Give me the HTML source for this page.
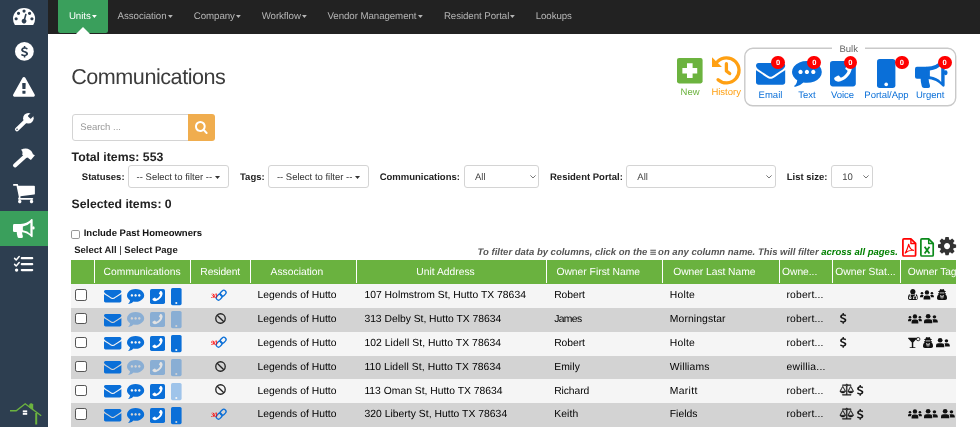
<!DOCTYPE html>
<html lang="en">
<head>
<meta charset="utf-8">
<title>Communications</title>
<style>
*{box-sizing:border-box;margin:0;padding:0}
html,body{width:980px;height:427px;overflow:hidden;background:#fff}
body{position:relative;font-family:"Liberation Sans",sans-serif;color:#333;font-size:10px;text-rendering:geometricPrecision}
.i{position:absolute;display:block;overflow:visible}
.t{position:absolute;line-height:1;white-space:nowrap}
.b{font-weight:bold}
.abs{position:absolute}
#side{position:absolute;left:0;top:0;width:47.5px;height:427px;background:#2d3e50}
#side .act{position:absolute;left:0;top:210.8px;width:47.5px;height:35px;background:#3a9f5c}
#nav{position:absolute;left:47.5px;top:0;width:932.5px;height:33.5px;background:#222}
#nav .tab{position:absolute;left:10.8px;top:0;width:49.6px;height:33px;background:#3a9f5c;border-radius:0 0 2.5px 2.5px}
#nav .notch{position:absolute;left:28.3px;top:26.6px;width:0;height:0;border-left:7px solid transparent;border-right:7px solid transparent;border-bottom:7px solid #fff}
.nv{color:#b5b5b5;text-decoration:none}
h1.t{font-weight:normal;color:#333}
.box{position:absolute;background:#fff;border:1px solid #d4d4d4;border-radius:3px}
.lbl{font-weight:bold;color:#222}
#thead{position:absolute;left:71px;top:260px;width:885px;height:24px;background:#6ab23f}
.sep{position:absolute;top:0;width:1px;height:23px;background:#fff}
.th{color:#fff}
.row{position:absolute;left:71px;width:885px}
.cb{position:absolute;left:4.4px;width:11.2px;height:11.2px;border:1.3px solid #555;border-radius:2.2px;background:#fff}
.td{color:#000}
#app{position:absolute;left:0;top:0;width:980px;height:427px;overflow:hidden;will-change:transform;background:#fff}

</style>
</head>
<body>
<div id="app">
<aside id="side"><div class="act"></div>
<svg class="i" style="left:12.9px;top:7.8px" width="22.1" height="17" viewBox="0 -1280 1792 1408" preserveAspectRatio="none"><path transform="scale(1,-1)" fill="#fff" d="M384 384q0 53 -37.5 90.5t-90.5 37.5t-90.5 -37.5t-37.5 -90.5t37.5 -90.5t90.5 -37.5t90.5 37.5t37.5 90.5zM576 832q0 53 -37.5 90.5t-90.5 37.5t-90.5 -37.5t-37.5 -90.5t37.5 -90.5t90.5 -37.5t90.5 37.5t37.5 90.5zM1004 351l101 382q6 26 -7.5 48.5t-38.5 29.5 t-48 -6.5t-30 -39.5l-101 -382q-60 -5 -107 -43.5t-63 -98.5q-20 -77 20 -146t117 -89t146 20t89 117q16 60 -6 117t-72 91zM1664 384q0 53 -37.5 90.5t-90.5 37.5t-90.5 -37.5t-37.5 -90.5t37.5 -90.5t90.5 -37.5t90.5 37.5t37.5 90.5zM1024 1024q0 53 -37.5 90.5 t-90.5 37.5t-90.5 -37.5t-37.5 -90.5t37.5 -90.5t90.5 -37.5t90.5 37.5t37.5 90.5zM1472 832q0 53 -37.5 90.5t-90.5 37.5t-90.5 -37.5t-37.5 -90.5t37.5 -90.5t90.5 -37.5t90.5 37.5t37.5 90.5zM1792 384q0 -261 -141 -483q-19 -29 -54 -29h-1402q-35 0 -54 29 q-141 221 -141 483q0 182 71 348t191 286t286 191t348 71t348 -71t286 -191t191 -286t71 -348z"/></svg>
<svg class="i" style="left:14.6px;top:42.2px" width="18.8" height="18.8" viewBox="0 0 100 100" preserveAspectRatio="none"><circle cx="50" cy="50" r="50" fill="#fff"/></svg>
<svg class="i" style="left:20.5px;top:45.9px" width="7" height="11.6" viewBox="44.9688 -1536 933.031 1792" preserveAspectRatio="none"><path transform="scale(1,-1)" fill="#2d3e50" d="M978 351q0 -153 -99.5 -263.5t-258.5 -136.5v-175q0 -14 -9 -23t-23 -9h-135q-13 0 -22.5 9.5t-9.5 22.5v175q-66 9 -127.5 31t-101.5 44.5t-74 48t-46.5 37.5t-17.5 18q-17 21 -2 41l103 135q7 10 23 12q15 2 24 -9l2 -2q113 -99 243 -125q37 -8 74 -8q81 0 142.5 43 t61.5 122q0 28 -15 53t-33.5 42t-58.5 37.5t-66 32t-80 32.5q-39 16 -61.5 25t-61.5 26.5t-62.5 31t-56.5 35.5t-53.5 42.5t-43.5 49t-35.5 58t-21 66.5t-8.5 78q0 138 98 242t255 134v180q0 13 9.5 22.5t22.5 9.5h135q14 0 23 -9t9 -23v-176q57 -6 110.5 -23t87 -33.5 t63.5 -37.5t39 -29t15 -14q17 -18 5 -38l-81 -146q-8 -15 -23 -16q-14 -3 -27 7q-3 3 -14.5 12t-39 26.5t-58.5 32t-74.5 26t-85.5 11.5q-95 0 -155 -43t-60 -111q0 -26 8.5 -48t29.5 -41.5t39.5 -33t56 -31t60.5 -27t70 -27.5q53 -20 81 -31.5t76 -35t75.5 -42.5t62 -50 t53 -63.5t31.5 -76.5t13 -94z"/></svg>
<svg class="i" style="left:12.9px;top:77.2px" width="21.9" height="19.7" viewBox="-1.01389 -1536 1794.03 1664" preserveAspectRatio="none"><path transform="scale(1,-1)" fill="#fff" d="M1024 161v190q0 14 -9.5 23.5t-22.5 9.5h-192q-13 0 -22.5 -9.5t-9.5 -23.5v-190q0 -14 9.5 -23.5t22.5 -9.5h192q13 0 22.5 9.5t9.5 23.5zM1022 535l18 459q0 12 -10 19q-13 11 -24 11h-220q-11 0 -24 -11q-10 -7 -10 -21l17 -457q0 -10 10 -16.5t24 -6.5h185 q14 0 23.5 6.5t10.5 16.5zM1008 1469l768 -1408q35 -63 -2 -126q-17 -29 -46.5 -46t-63.5 -17h-1536q-34 0 -63.5 17t-46.5 46q-37 63 -2 126l768 1408q17 31 47 49t65 18t65 -18t47 -49z"/></svg>
<svg class="i" style="left:13.9px;top:112.8px" width="19.7" height="19.3" viewBox="0 0 200 200" preserveAspectRatio="none"><path d="M30 170L122 78" stroke="#fff" stroke-width="40" stroke-linecap="round" fill="none"/><circle cx="146" cy="54" r="54" fill="#fff"/><rect x="-21" y="-90" width="42" height="84" rx="6" transform="translate(150,50) rotate(45)" fill="#2d3e50"/><circle cx="31" cy="169" r="8" fill="#2d3e50"/></svg>
<svg class="i" style="left:12.9px;top:148px" width="21.9" height="19.7" viewBox="0 0 220 200" preserveAspectRatio="none"><path d="M20 178 L122 84" stroke="#fff" stroke-width="40" stroke-linecap="round" fill="none"/><path d="M80 18 C124 -8 176 4 196 50 L200 64 L220 74 L180 122 L158 106 L150 96 C138 102 124 100 114 90 L92 66 C100 50 96 32 80 18 Z" fill="#fff"/></svg>
<svg class="i" style="left:12.9px;top:183.6px" width="21.9" height="19.3" viewBox="0 -1280 1664 1408" preserveAspectRatio="none"><path transform="scale(1,-1)" fill="#fff" d="M640 0q0 -52 -38 -90t-90 -38t-90 38t-38 90t38 90t90 38t90 -38t38 -90zM1536 0q0 -52 -38 -90t-90 -38t-90 38t-38 90t38 90t90 38t90 -38t38 -90zM1664 1088v-512q0 -24 -16.5 -42.5t-40.5 -21.5l-1044 -122q13 -60 13 -70q0 -16 -24 -64h920q26 0 45 -19t19 -45 t-19 -45t-45 -19h-1024q-26 0 -45 19t-19 45q0 11 8 31.5t16 36t21.5 40t15.5 29.5l-177 823h-204q-26 0 -45 19t-19 45t19 45t45 19h256q16 0 28.5 -6.5t19.5 -15.5t13 -24.5t8 -26t5.5 -29.5t4.5 -26h1201q26 0 45 -19t19 -45z"/></svg>
<svg class="i" style="left:13.1px;top:218.9px" width="21.7" height="19" viewBox="0 0 576 512" preserveAspectRatio="none"><g fill="#fff"><rect x="0" y="138" width="240" height="210" rx="34"/><path d="M200 138Q390 128 490 3Q522 -8 522 26V464Q522 498 490 487Q390 360 200 348Z"/><ellipse cx="540" cy="242" rx="34" ry="44"/><path d="M98 330H240V345Q240 400 262 458Q274 512 232 512H160Q128 512 120 480Q98 400 98 330Z"/></g><path d="M262 202Q392 186 462 104V404Q392 324 262 304Z" fill="#3a9f5c"/></svg>
<svg class="i" style="left:14.1px;top:255.7px" width="19.3" height="16.3" viewBox="0 0 193 163" preserveAspectRatio="none"><g stroke="#fff" stroke-linecap="round" fill="none"><path d="M78 22H182M78 82H182M78 141H182" stroke-width="22"/><path d="M6 24L22 40L52 6M6 84L22 100L52 66" stroke-width="15" stroke-linejoin="round"/></g><circle cx="26" cy="141" r="17" fill="#fff"/></svg>
<svg class="i" style="left:10px;top:403px" width="31.5" height="21.5" viewBox="0 0 315 215" preserveAspectRatio="none"><path d="M0 78H62L152 8L312 128" stroke="#6cb33f" stroke-width="14" fill="none" stroke-linejoin="miter"/><path d="M262 100V215" stroke="#6cb33f" stroke-width="20" fill="none"/><path d="M192 46V14Q212 -10 232 14V76Z" fill="#6cb33f"/><rect x="128" y="74" width="44" height="18" fill="#fff"/><rect x="128" y="98" width="44" height="20" fill="#fff"/></svg>
</aside>
<div id="nav"><div class="tab"></div><div class="notch"></div></div>
<a class="t nv" style="left:68.9px;top:12.00px;font-size:9.7px;color:#fff;letter-spacing:-0.06px">Units</a>
<svg class="i" style="left:91.716px;top:15.4px" width="4.8" height="2.9" viewBox="0 0 48 29" preserveAspectRatio="none"><path d="M0 0H48L24 29Z" fill="#fff"/></svg>
<a class="t nv" style="left:117.6px;top:12.00px;font-size:9.7px;color:#b5b5b5;letter-spacing:-0.06px">Association</a>
<svg class="i" style="left:167.546px;top:15.4px" width="4.8" height="2.9" viewBox="0 0 48 29" preserveAspectRatio="none"><path d="M0 0H48L24 29Z" fill="#b5b5b5"/></svg>
<a class="t nv" style="left:193.8px;top:12.00px;font-size:9.7px;color:#b5b5b5;letter-spacing:-0.06px">Company</a>
<svg class="i" style="left:235.906px;top:15.4px" width="4.8" height="2.9" viewBox="0 0 48 29" preserveAspectRatio="none"><path d="M0 0H48L24 29Z" fill="#b5b5b5"/></svg>
<a class="t nv" style="left:261.7px;top:12.00px;font-size:9.7px;color:#b5b5b5;letter-spacing:-0.06px">Workflow</a>
<svg class="i" style="left:301.932px;top:15.4px" width="4.8" height="2.9" viewBox="0 0 48 29" preserveAspectRatio="none"><path d="M0 0H48L24 29Z" fill="#b5b5b5"/></svg>
<a class="t nv" style="left:327.5px;top:12.00px;font-size:9.7px;color:#b5b5b5;letter-spacing:-0.06px">Vendor Management</a>
<svg class="i" style="left:417.535px;top:15.4px" width="4.8" height="2.9" viewBox="0 0 48 29" preserveAspectRatio="none"><path d="M0 0H48L24 29Z" fill="#b5b5b5"/></svg>
<a class="t nv" style="left:443.9px;top:12.00px;font-size:9.7px;color:#b5b5b5;letter-spacing:-0.06px">Resident Portal</a>
<svg class="i" style="left:510.329px;top:15.4px" width="4.8" height="2.9" viewBox="0 0 48 29" preserveAspectRatio="none"><path d="M0 0H48L24 29Z" fill="#b5b5b5"/></svg>
<a class="t nv" style="left:535.7px;top:12.00px;font-size:9.7px;color:#b5b5b5;letter-spacing:-0.06px">Lookups</a>
<h1 class="t" style="left:71.2px;top:66.00px;font-size:21.6px;letter-spacing:-0.473px;color:#3c3c3c">Communications</h1>
<svg class="i" style="left:677px;top:57.5px" width="25.6" height="25.4" viewBox="0 0 100 100" preserveAspectRatio="none"><rect x="0" y="0" width="100" height="100" rx="8" fill="#6cb33f"/><path d="M50 21V79M21 50H79" stroke="#fff" stroke-width="22" fill="none"/></svg>
<span class="t" style="left:680.6px;top:88.00px;font-size:9.5px;color:#6cb33f">New</span>
<svg class="i" style="left:711.8px;top:56px" width="28.6" height="28.4" viewBox="405 155 278 276" preserveAspectRatio="none"><g fill="none" stroke="#ffa012" stroke-width="32" stroke-linecap="round"><path d="M460 208A122 122 0 1 1 464 385"/><path d="M545 230V300L577 326" stroke-linejoin="round"/></g><path d="M405 166V262H502Z" fill="#ffa012"/></svg>
<span class="t" style="left:711.4px;top:88.00px;font-size:9.5px;color:#ffa012">History</span>
<svg class="i" style="left:740px;top:44px" width="220" height="66" viewBox="740 44 220 66" preserveAspectRatio="none"><rect x="744.8" y="48.3" width="210.9" height="57.5" rx="8" fill="none" stroke="#c9c9c9" stroke-width="1.4"/><rect x="832" y="46" width="33" height="5" fill="#fff"/></svg>
<span class="t" style="left:839.5px;top:45.00px;font-size:9.5px;color:#666">Bulk</span>
<svg class="i" style="left:755.9px;top:62.8px" width="29.2" height="21.7" viewBox="0 -1280 1792 1408" preserveAspectRatio="none"><path transform="scale(1,-1)" fill="#0a6fd8" d="M1792 826v-794q0 -66 -47 -113t-113 -47h-1472q-66 0 -113 47t-47 113v794q44 -49 101 -87q362 -246 497 -345q57 -42 92.5 -65.5t94.5 -48t110 -24.5h1h1q51 0 110 24.5t94.5 48t92.5 65.5q170 123 498 345q57 39 100 87zM1792 1120q0 -79 -49 -151t-122 -123 q-376 -261 -468 -325q-10 -7 -42.5 -30.5t-54 -38t-52 -32.5t-57.5 -27t-50 -9h-1h-1q-23 0 -50 9t-57.5 27t-52 32.5t-54 38t-42.5 30.5q-91 64 -262 182.5t-205 142.5q-62 42 -117 115.5t-55 136.5q0 78 41.5 130t118.5 52h1472q65 0 112.5 -47t47.5 -113z"/></svg>
<svg class="i" style="left:791.6px;top:60.8px" width="29.8" height="25.7" viewBox="0 -1280 1792 1504.12" preserveAspectRatio="none"><path transform="scale(1,-1)" fill="#0a6fd8" d="M640 640q0 53 -37.5 90.5t-90.5 37.5t-90.5 -37.5t-37.5 -90.5t37.5 -90.5t90.5 -37.5t90.5 37.5t37.5 90.5zM1024 640q0 53 -37.5 90.5t-90.5 37.5t-90.5 -37.5t-37.5 -90.5t37.5 -90.5t90.5 -37.5t90.5 37.5t37.5 90.5zM1408 640q0 53 -37.5 90.5t-90.5 37.5 t-90.5 -37.5t-37.5 -90.5t37.5 -90.5t90.5 -37.5t90.5 37.5t37.5 90.5zM1792 640q0 -174 -120 -321.5t-326 -233t-450 -85.5q-110 0 -211 18q-173 -173 -435 -229q-52 -10 -86 -13q-12 -1 -22 6t-13 18q-4 15 20 37q5 5 23.5 21.5t25.5 23.5t23.5 25.5t24 31.5t20.5 37 t20 48t14.5 57.5t12.5 72.5q-146 90 -229.5 216.5t-83.5 269.5q0 174 120 321.5t326 233t450 85.5t450 -85.5t326 -233t120 -321.5z"/></svg>
<svg class="i" style="left:829.8px;top:61px" width="25.8" height="25.4" viewBox="0 0 1536 1536" preserveAspectRatio="none"><rect x="0" y="0" width="1536" height="1536" rx="170" fill="#0a6fd8"/><path transform="translate(1290,1250) scale(-0.74,-0.74)" fill="#fff" d="M1408 296q0 -27 -10 -70.5t-21 -68.5q-21 -50 -122 -106q-94 -51 -186 -51q-27 0 -53 3.5t-57.5 12.5t-47 14.5t-55.5 20.5t-49 18q-98 35 -175 83q-127 79 -264 216t-216 264q-48 77 -83 175q-3 9 -18 49t-20.5 55.5t-14.5 47t-12.5 57.5t-3.5 53q0 92 51 186 q56 101 106 122q25 11 68.5 21t70.5 10q14 0 21 -3q18 -6 53 -76q11 -19 30 -54t35 -63.5t31 -53.5q3 -4 17.5 -25t21.5 -35.5t7 -28.5q0 -20 -28.5 -50t-62 -55t-62 -53t-28.5 -46q0 -9 5 -22.5t8.5 -20.5t14 -24t11.5 -19q76 -137 174 -235t235 -174q2 -1 19 -11.5t24 -14 t20.5 -8.5t22.5 -5q18 0 46 28.5t53 62t55 62t50 28.5q14 0 28.5 -7t35.5 -21.5t25 -17.5q25 -15 53.5 -31t63.5 -35t54 -30q70 -35 76 -53q3 -7 3 -21z"/></svg>
<svg class="i" style="left:877.2px;top:59.1px" width="18.4" height="29" viewBox="0 0 320 512" preserveAspectRatio="none"><rect x="0" y="0" width="320" height="512" rx="48" fill="#0a6fd8"/><circle cx="160" cy="448" r="32" fill="#fff"/></svg>
<svg class="i" style="left:915.4px;top:59px" width="32.7" height="29" viewBox="0 0 576 512" preserveAspectRatio="none"><g fill="#0a6fd8"><rect x="0" y="138" width="240" height="210" rx="34"/><path d="M200 138Q390 128 490 3Q522 -8 522 26V464Q522 498 490 487Q390 360 200 348Z"/><ellipse cx="540" cy="242" rx="34" ry="44"/><path d="M98 330H240V345Q240 400 262 458Q274 512 232 512H160Q128 512 120 480Q98 400 98 330Z"/></g><path d="M262 202Q392 186 462 104V404Q392 324 262 304Z" fill="#fff"/></svg>
<div class="abs" style="left:771.3px;top:55.7px;width:13.8px;height:13.8px;border-radius:50%;background:#f00"></div>
<span class="t b" style="left:776.1px;top:59.00px;font-size:7.6px;color:#fff">0</span>
<div class="abs" style="left:807.4px;top:55.7px;width:13.8px;height:13.8px;border-radius:50%;background:#f00"></div>
<span class="t b" style="left:812.2px;top:59.00px;font-size:7.6px;color:#fff">0</span>
<div class="abs" style="left:843.5px;top:55.7px;width:13.8px;height:13.8px;border-radius:50%;background:#f00"></div>
<span class="t b" style="left:848.3px;top:59.00px;font-size:7.6px;color:#fff">0</span>
<div class="abs" style="left:894.9px;top:55.7px;width:13.8px;height:13.8px;border-radius:50%;background:#f00"></div>
<span class="t b" style="left:899.7px;top:59.00px;font-size:7.6px;color:#fff">0</span>
<div class="abs" style="left:937.8px;top:55.7px;width:13.8px;height:13.8px;border-radius:50%;background:#f00"></div>
<span class="t b" style="left:942.6px;top:59.00px;font-size:7.6px;color:#fff">0</span>
<span class="t" style="left:758.6px;top:91.00px;font-size:9.5px;color:#0a6fd8">Email</span>
<span class="t" style="left:798.3px;top:91.00px;font-size:9.5px;color:#0a6fd8">Text</span>
<span class="t" style="left:830.9px;top:91.00px;font-size:9.5px;color:#0a6fd8">Voice</span>
<span class="t" style="left:864.3px;top:91.00px;font-size:9.5px;color:#0a6fd8">Portal/App</span>
<span class="t" style="left:915.9px;top:91.00px;font-size:9.5px;color:#0a6fd8">Urgent</span>
<div class="box" style="left:71.6px;top:113.6px;width:117px;height:27.2px;border-radius:3px 0 0 3px"></div>
<span class="t" style="left:80.3px;top:123.00px;font-size:9.5px;color:#999">Search ...</span>
<div class="abs" style="left:187.6px;top:113.6px;width:27px;height:27.2px;background:#f0ad4e;border-radius:0 3px 3px 0"></div>
<svg class="i" style="left:194.8px;top:120.6px" width="12.6" height="13" viewBox="0 -1408 1664 1664" preserveAspectRatio="none"><path transform="scale(1,-1)" fill="#fff" d="M1152 704q0 185 -131.5 316.5t-316.5 131.5t-316.5 -131.5t-131.5 -316.5t131.5 -316.5t316.5 -131.5t316.5 131.5t131.5 316.5zM1664 -128q0 -52 -38 -90t-90 -38q-54 0 -90 38l-343 342q-179 -124 -399 -124q-143 0 -273.5 55.5t-225 150t-150 225t-55.5 273.5 t55.5 273.5t150 225t225 150t273.5 55.5t273.5 -55.5t225 -150t150 -225t55.5 -273.5q0 -220 -124 -399l343 -343q37 -37 37 -90z"/></svg>
<strong class="t b" style="left:71.6px;top:151.00px;font-size:12.25px;color:#222">Total items: 553</strong>
<strong class="t b" style="left:71.6px;top:198.00px;font-size:12.25px;color:#222">Selected items: 0</strong>
<label class="t lbl" style="left:81.8px;top:173.00px;font-size:9.5px;">Statuses:</label>
<div class="box" style="left:127.9px;top:165.2px;width:101.3px;height:22.4px"></div>
<span class="t" style="left:136.6px;top:173.00px;font-size:9.5px;color:#333">-- Select to filter --</span>
<svg class="i" style="left:214.8px;top:175.5px" width="5" height="2.9" viewBox="0 0 48 29" preserveAspectRatio="none"><path d="M0 0H48L24 29Z" fill="#333"/></svg>
<label class="t lbl" style="left:240px;top:173.00px;font-size:9.5px;">Tags:</label>
<div class="box" style="left:268px;top:165.2px;width:101px;height:22.4px"></div>
<span class="t" style="left:276.9px;top:173.00px;font-size:9.5px;color:#333">-- Select to filter --</span>
<svg class="i" style="left:355.1px;top:175.5px" width="5" height="2.9" viewBox="0 0 48 29" preserveAspectRatio="none"><path d="M0 0H48L24 29Z" fill="#333"/></svg>
<label class="t lbl" style="left:379.7px;top:173.00px;font-size:9.5px;">Communications:</label>
<div class="box" style="left:463.7px;top:165.2px;width:75.5px;height:22.4px"></div>
<span class="t" style="left:475px;top:173.00px;font-size:9.5px;color:#444">All</span>
<label class="t lbl" style="left:550px;top:173.00px;font-size:9.5px;">Resident Portal:</label>
<div class="box" style="left:626px;top:165.2px;width:149.6px;height:22.4px"></div>
<span class="t" style="left:637.3px;top:173.00px;font-size:9.5px;color:#444">All</span>
<label class="t lbl" style="left:786.7px;top:173.00px;font-size:9.5px;">List size:</label>
<div class="box" style="left:830.5px;top:165.2px;width:42.2px;height:22.4px"></div>
<span class="t" style="left:842.3px;top:173.00px;font-size:9.5px;color:#444">10</span>
<svg class="i" style="left:529.6px;top:174.8px" width="6" height="3.6" viewBox="0 0 60 36" preserveAspectRatio="none"><path d="M4 4L30 30L56 4" stroke="#555" stroke-width="8" fill="none"/></svg>
<svg class="i" style="left:766px;top:174.8px" width="6" height="3.6" viewBox="0 0 60 36" preserveAspectRatio="none"><path d="M4 4L30 30L56 4" stroke="#555" stroke-width="8" fill="none"/></svg>
<svg class="i" style="left:863px;top:174.8px" width="6" height="3.6" viewBox="0 0 60 36" preserveAspectRatio="none"><path d="M4 4L30 30L56 4" stroke="#555" stroke-width="8" fill="none"/></svg>
<div class="abs" style="left:71px;top:230px;width:9px;height:9px;border:1px solid #999;border-radius:1.8px;background:#fff"></div>
<label class="t b" style="left:83.7px;top:229.00px;font-size:9.5px;color:#111">Include Past Homeowners</label>
<span class="t b" style="left:74.2px;top:246.00px;font-size:9.5px;color:#222">Select All <span style="font-weight:normal">|</span> Select Page</span>
<span class="t b" style="left:477.6px;top:248.00px;font-size:9.5px;font-style:italic;color:#555">To filter data by columns, click on the <span style="font-style:normal;font-size:11.5px;line-height:0;letter-spacing:-1.1px;position:relative;top:1.3px;left:0">≡</span> on any column name. This will filter <span style="color:#008000">across all pages.</span></span>
<svg class="i" style="left:901.6px;top:237.7px" width="14.5" height="18.9" viewBox="0 0 384 512" preserveAspectRatio="none"><g fill="none" stroke="#f00" stroke-linejoin="round"><path d="M52 24H236L360 148V460Q360 488 332 488H52Q24 488 24 460V52Q24 24 52 24Z" stroke-width="46"/><path d="M236 30V148H354" stroke-width="38"/><path d="M178 170C150 250 140 330 84 410M178 170C200 270 240 320 306 334M92 402C150 350 230 330 306 334" stroke-width="30" stroke-linecap="round"/></g></svg>
<svg class="i" style="left:919.6px;top:237.7px" width="14.1" height="18.9" viewBox="0 0 384 512" preserveAspectRatio="none"><g fill="none" stroke="#0a8a1a" stroke-linejoin="round"><path d="M52 24H236L360 148V460Q360 488 332 488H52Q24 488 24 460V52Q24 24 52 24Z" stroke-width="46"/><path d="M236 30V148H354" stroke-width="38"/><path d="M126 236L258 420M258 236L126 420" stroke-width="48"/></g></svg>
<svg class="i" style="left:937.8px;top:236.7px" width="18.1" height="18.2" viewBox="0 -1408 1536 1536" preserveAspectRatio="none"><path transform="scale(1,-1)" fill="#333" d="M1024 640q0 106 -75 181t-181 75t-181 -75t-75 -181t75 -181t181 -75t181 75t75 181zM1536 749v-222q0 -12 -8 -23t-20 -13l-185 -28q-19 -54 -39 -91q35 -50 107 -138q10 -12 10 -25t-9 -23q-27 -37 -99 -108t-94 -71q-12 0 -26 9l-138 108q-44 -23 -91 -38 q-16 -136 -29 -186q-7 -28 -36 -28h-222q-14 0 -24.5 8.5t-11.5 21.5l-28 184q-49 16 -90 37l-141 -107q-10 -9 -25 -9q-14 0 -25 11q-126 114 -165 168q-7 10 -7 23q0 12 8 23q15 21 51 66.5t54 70.5q-27 50 -41 99l-183 27q-13 2 -21 12.5t-8 23.5v222q0 12 8 23t19 13 l186 28q14 46 39 92q-40 57 -107 138q-10 12 -10 24q0 10 9 23q26 36 98.5 107.5t94.5 71.5q13 0 26 -10l138 -107q44 23 91 38q16 136 29 186q7 28 36 28h222q14 0 24.5 -8.5t11.5 -21.5l28 -184q49 -16 90 -37l142 107q9 9 24 9q13 0 25 -10q129 -119 165 -170q7 -8 7 -22 q0 -12 -8 -23q-15 -21 -51 -66.5t-54 -70.5q26 -50 41 -98l183 -28q13 -2 21 -12.5t8 -23.5z"/></svg>
<div id="thead">
<div class="sep" style="left:22.5px"></div>
<div class="sep" style="left:118.5px"></div>
<div class="sep" style="left:178.5px"></div>
<div class="sep" style="left:284.5px"></div>
<div class="sep" style="left:475.1px"></div>
<div class="sep" style="left:590.5px"></div>
<div class="sep" style="left:707.5px"></div>
<div class="sep" style="left:760.5px"></div>
<div class="sep" style="left:828.5px"></div>
</div>
<span class="t th" style="left:103.6px;top:268.00px;font-size:10.3px;letter-spacing:0.020px">Communications</span>
<span class="t th" style="left:200.3px;top:268.00px;font-size:10.3px;letter-spacing:-0.105px">Resident</span>
<span class="t th" style="left:270.6px;top:268.00px;font-size:10.3px;letter-spacing:0.004px">Association</span>
<span class="t th" style="left:416.3px;top:268.00px;font-size:10.3px;letter-spacing:-0.000px">Unit Address</span>
<span class="t th" style="left:556.4px;top:268.00px;font-size:10.3px;letter-spacing:0.005px">Owner First Name</span>
<span class="t th" style="left:673.2px;top:268.00px;font-size:10.3px;letter-spacing:-0.054px">Owner Last Name</span>
<span class="t th" style="left:782.1px;top:268.00px;font-size:10.3px;letter-spacing:-0.048px">Owne...</span>
<span class="t th" style="left:835.3px;top:268.00px;font-size:10.3px;letter-spacing:0.020px">Owner Stat...</span>
<div class="abs" style="left:900px;top:262px;width:56px;height:20px;overflow:hidden"><span class="t th" style="left:7.8px;top:6.00px;font-size:10.3px;letter-spacing:-0.112px">Owner Tags</span></div>
<div class="row" style="top:284px;height:24px;background:#f5f5f5">
<div class="cb" style="top:5.4px"></div>
</div>
<svg class="i" style="left:104.1px;top:289.8px" width="17.4" height="12.5" viewBox="0 -1280 1792 1408" preserveAspectRatio="none"><path transform="scale(1,-1)" fill="#0a6fd8" d="M1792 826v-794q0 -66 -47 -113t-113 -47h-1472q-66 0 -113 47t-47 113v794q44 -49 101 -87q362 -246 497 -345q57 -42 92.5 -65.5t94.5 -48t110 -24.5h1h1q51 0 110 24.5t94.5 48t92.5 65.5q170 123 498 345q57 39 100 87zM1792 1120q0 -79 -49 -151t-122 -123 q-376 -261 -468 -325q-10 -7 -42.5 -30.5t-54 -38t-52 -32.5t-57.5 -27t-50 -9h-1h-1q-23 0 -50 9t-57.5 27t-52 32.5t-54 38t-42.5 30.5q-91 64 -262 182.5t-205 142.5q-62 42 -117 115.5t-55 136.5q0 78 41.5 130t118.5 52h1472q65 0 112.5 -47t47.5 -113z"/></svg>
<svg class="i" style="left:127.1px;top:288.5px" width="17.2" height="15" viewBox="0 -1280 1792 1504.12" preserveAspectRatio="none"><path transform="scale(1,-1)" fill="#0a6fd8" d="M640 640q0 53 -37.5 90.5t-90.5 37.5t-90.5 -37.5t-37.5 -90.5t37.5 -90.5t90.5 -37.5t90.5 37.5t37.5 90.5zM1024 640q0 53 -37.5 90.5t-90.5 37.5t-90.5 -37.5t-37.5 -90.5t37.5 -90.5t90.5 -37.5t90.5 37.5t37.5 90.5zM1408 640q0 53 -37.5 90.5t-90.5 37.5 t-90.5 -37.5t-37.5 -90.5t37.5 -90.5t90.5 -37.5t90.5 37.5t37.5 90.5zM1792 640q0 -174 -120 -321.5t-326 -233t-450 -85.5q-110 0 -211 18q-173 -173 -435 -229q-52 -10 -86 -13q-12 -1 -22 6t-13 18q-4 15 20 37q5 5 23.5 21.5t25.5 23.5t23.5 25.5t24 31.5t20.5 37 t20 48t14.5 57.5t12.5 72.5q-146 90 -229.5 216.5t-83.5 269.5q0 174 120 321.5t326 233t450 85.5t450 -85.5t326 -233t120 -321.5z"/></svg>
<svg class="i" style="left:150.1px;top:288.5px" width="15" height="15" viewBox="0 0 1536 1536" preserveAspectRatio="none"><rect x="0" y="0" width="1536" height="1536" rx="170" fill="#0a6fd8"/><path transform="translate(1290,1250) scale(-0.74,-0.74)" fill="#fff" d="M1408 296q0 -27 -10 -70.5t-21 -68.5q-21 -50 -122 -106q-94 -51 -186 -51q-27 0 -53 3.5t-57.5 12.5t-47 14.5t-55.5 20.5t-49 18q-98 35 -175 83q-127 79 -264 216t-216 264q-48 77 -83 175q-3 9 -18 49t-20.5 55.5t-14.5 47t-12.5 57.5t-3.5 53q0 92 51 186 q56 101 106 122q25 11 68.5 21t70.5 10q14 0 21 -3q18 -6 53 -76q11 -19 30 -54t35 -63.5t31 -53.5q3 -4 17.5 -25t21.5 -35.5t7 -28.5q0 -20 -28.5 -50t-62 -55t-62 -53t-28.5 -46q0 -9 5 -22.5t8.5 -20.5t14 -24t11.5 -19q76 -137 174 -235t235 -174q2 -1 19 -11.5t24 -14 t20.5 -8.5t22.5 -5q18 0 46 28.5t53 62t55 62t50 28.5q14 0 28.5 -7t35.5 -21.5t25 -17.5q25 -15 53.5 -31t63.5 -35t54 -30q70 -35 76 -53q3 -7 3 -21z"/></svg>
<svg class="i" style="left:171px;top:287.5px" width="10.6" height="17.2" viewBox="0 0 320 512" preserveAspectRatio="none"><rect x="0" y="0" width="320" height="512" rx="48" fill="#0a6fd8"/><circle cx="160" cy="448" r="32" fill="#f5f5f5"/></svg>
<svg class="i" style="left:216px;top:289.5px" width="10.3" height="10.3" viewBox="0 0 100 100" preserveAspectRatio="none"><g fill="none" stroke="#0a6fd8" stroke-width="13" transform="rotate(-45 50 50)"><rect x="-8" y="28" width="62" height="44" rx="22"/><rect x="46" y="28" width="62" height="44" rx="22"/></g></svg>
<span class="t b" style="left:211px;top:294.00px;font-size:6.6px;color:#f00;font-style:italic;letter-spacing:-0.3px;font-family:'Liberation Serif',serif">30</span>
<span class="t td" style="left:257.5px;top:291.00px;font-size:10.35px;letter-spacing:0.012px">Legends of Hutto</span>
<span class="t td" style="left:364.4px;top:291.00px;font-size:10.35px;letter-spacing:0.024px">107 Holmstrom St, Hutto TX 78634</span>
<span class="t td" style="left:554.2px;top:291.00px;font-size:10.35px;letter-spacing:-0.051px">Robert</span>
<span class="t td" style="left:669.8px;top:291.00px;font-size:10.35px;letter-spacing:0.227px">Holte</span>
<span class="t td" style="left:786.5px;top:291.00px;font-size:10.35px;letter-spacing:0.154px">robert...</span>
<svg class="i" style="left:907.8px;top:289.2px" width="9.7" height="11" viewBox="0 -1408 1408 1536" preserveAspectRatio="none"><path transform="scale(1,-1)" fill="#111" d="M384 192q0 -26 -19 -45t-45 -19t-45 19t-19 45t19 45t45 19t45 -19t19 -45zM1408 131q0 -121 -73 -190t-194 -69h-874q-121 0 -194 69t-73 190q0 68 5.5 131t24 138t47.5 132.5t81 103t120 60.5q-22 -52 -22 -120v-203q-58 -20 -93 -70t-35 -111q0 -80 56 -136t136 -56 t136 56t56 136q0 61 -35.5 111t-92.5 70v203q0 62 25 93q132 -104 295 -104t295 104q25 -31 25 -93v-64q-106 0 -181 -75t-75 -181v-89q-32 -29 -32 -71q0 -40 28 -68t68 -28t68 28t28 68q0 42 -32 71v89q0 52 38 90t90 38t90 -38t38 -90v-89q-32 -29 -32 -71q0 -40 28 -68 t68 -28t68 28t28 68q0 42 -32 71v89q0 68 -34.5 127.5t-93.5 93.5q0 10 0.5 42.5t0 48t-2.5 41.5t-7 47t-13 40q68 -15 120 -60.5t81 -103t47.5 -132.5t24 -138t5.5 -131zM1088 1024q0 -159 -112.5 -271.5t-271.5 -112.5t-271.5 112.5t-112.5 271.5t112.5 271.5t271.5 112.5 t271.5 -112.5t112.5 -271.5z"/></svg>
<svg class="i" style="left:920.1px;top:289.7px" width="13.9" height="9.6" viewBox="0 0 140 96" preserveAspectRatio="none"><g fill="#111"><circle cx="70" cy="24" r="22"/><path d="M36 96V78Q36 54 60 54H80Q104 54 104 78V96Z"/><circle cx="20" cy="32" r="13"/><path d="M0 72V64Q0 50 14 50H28Q34 50 38 54Q28 62 28 74V72Z"/><circle cx="120" cy="32" r="13"/><path d="M140 72V64Q140 50 126 50H112Q106 50 102 54Q112 62 112 74V72Z"/></g></svg>
<svg class="i" style="left:936.6px;top:289.2px" width="10" height="11" viewBox="0 -1536 1408 1664" preserveAspectRatio="none"><path transform="scale(1,-1)" fill="#111" d="M576 0l96 448l-96 128l-128 64zM832 0l128 640l-128 -64l-96 -128zM992 1010q-2 4 -4 6q-10 8 -96 8q-70 0 -167 -19q-7 -2 -21 -2t-21 2q-97 19 -167 19q-86 0 -96 -8q-2 -2 -4 -6q2 -18 4 -27q2 -3 7.5 -6.5t7.5 -10.5q2 -4 7.5 -20.5t7 -20.5t7.5 -17t8.5 -17t9 -14 t12 -13.5t14 -9.5t17.5 -8t20.5 -4t24.5 -2q36 0 59 12.5t32.5 30t14.5 34.5t11.5 29.5t17.5 12.5h12q11 0 17.5 -12.5t11.5 -29.5t14.5 -34.5t32.5 -30t59 -12.5q13 0 24.5 2t20.5 4t17.5 8t14 9.5t12 13.5t9 14t8.5 17t7.5 17t7 20.5t7.5 20.5q2 7 7.5 10.5t7.5 6.5 q2 9 4 27zM1408 131q0 -121 -73 -190t-194 -69h-874q-121 0 -194 69t-73 190q0 61 4.5 118t19 125.5t37.5 123.5t63.5 103.5t93.5 74.5l-90 220h214q-22 64 -22 128q0 12 2 32q-194 40 -194 96q0 57 210 99q17 62 51.5 134t70.5 114q32 37 76 37q30 0 84 -31t84 -31t84 31 t84 31q44 0 76 -37q36 -42 70.5 -114t51.5 -134q210 -42 210 -99q0 -56 -194 -96q7 -81 -20 -160h214l-82 -225q63 -33 107.5 -96.5t65.5 -143.5t29 -151.5t8 -148.5z"/></svg>
<div class="row" style="top:308px;height:24px;background:#d3d3d3">
<div class="cb" style="top:5.2px"></div>
</div>
<svg class="i" style="left:104.1px;top:313.6px" width="17.4" height="12.5" viewBox="0 -1280 1792 1408" preserveAspectRatio="none"><path transform="scale(1,-1)" fill="#0a6fd8" d="M1792 826v-794q0 -66 -47 -113t-113 -47h-1472q-66 0 -113 47t-47 113v794q44 -49 101 -87q362 -246 497 -345q57 -42 92.5 -65.5t94.5 -48t110 -24.5h1h1q51 0 110 24.5t94.5 48t92.5 65.5q170 123 498 345q57 39 100 87zM1792 1120q0 -79 -49 -151t-122 -123 q-376 -261 -468 -325q-10 -7 -42.5 -30.5t-54 -38t-52 -32.5t-57.5 -27t-50 -9h-1h-1q-23 0 -50 9t-57.5 27t-52 32.5t-54 38t-42.5 30.5q-91 64 -262 182.5t-205 142.5q-62 42 -117 115.5t-55 136.5q0 78 41.5 130t118.5 52h1472q65 0 112.5 -47t47.5 -113z"/></svg>
<svg class="i" style="left:127.1px;top:312.3px;opacity:0.36" width="17.2" height="15" viewBox="0 -1280 1792 1504.12" preserveAspectRatio="none"><path transform="scale(1,-1)" fill="#0a6fd8" d="M640 640q0 53 -37.5 90.5t-90.5 37.5t-90.5 -37.5t-37.5 -90.5t37.5 -90.5t90.5 -37.5t90.5 37.5t37.5 90.5zM1024 640q0 53 -37.5 90.5t-90.5 37.5t-90.5 -37.5t-37.5 -90.5t37.5 -90.5t90.5 -37.5t90.5 37.5t37.5 90.5zM1408 640q0 53 -37.5 90.5t-90.5 37.5 t-90.5 -37.5t-37.5 -90.5t37.5 -90.5t90.5 -37.5t90.5 37.5t37.5 90.5zM1792 640q0 -174 -120 -321.5t-326 -233t-450 -85.5q-110 0 -211 18q-173 -173 -435 -229q-52 -10 -86 -13q-12 -1 -22 6t-13 18q-4 15 20 37q5 5 23.5 21.5t25.5 23.5t23.5 25.5t24 31.5t20.5 37 t20 48t14.5 57.5t12.5 72.5q-146 90 -229.5 216.5t-83.5 269.5q0 174 120 321.5t326 233t450 85.5t450 -85.5t326 -233t120 -321.5z"/></svg>
<svg class="i" style="left:150.1px;top:312.3px;opacity:0.36" width="15" height="15" viewBox="0 0 1536 1536" preserveAspectRatio="none"><rect x="0" y="0" width="1536" height="1536" rx="170" fill="#0a6fd8"/><path transform="translate(1290,1250) scale(-0.74,-0.74)" fill="#fff" d="M1408 296q0 -27 -10 -70.5t-21 -68.5q-21 -50 -122 -106q-94 -51 -186 -51q-27 0 -53 3.5t-57.5 12.5t-47 14.5t-55.5 20.5t-49 18q-98 35 -175 83q-127 79 -264 216t-216 264q-48 77 -83 175q-3 9 -18 49t-20.5 55.5t-14.5 47t-12.5 57.5t-3.5 53q0 92 51 186 q56 101 106 122q25 11 68.5 21t70.5 10q14 0 21 -3q18 -6 53 -76q11 -19 30 -54t35 -63.5t31 -53.5q3 -4 17.5 -25t21.5 -35.5t7 -28.5q0 -20 -28.5 -50t-62 -55t-62 -53t-28.5 -46q0 -9 5 -22.5t8.5 -20.5t14 -24t11.5 -19q76 -137 174 -235t235 -174q2 -1 19 -11.5t24 -14 t20.5 -8.5t22.5 -5q18 0 46 28.5t53 62t55 62t50 28.5q14 0 28.5 -7t35.5 -21.5t25 -17.5q25 -15 53.5 -31t63.5 -35t54 -30q70 -35 76 -53q3 -7 3 -21z"/></svg>
<svg class="i" style="left:171px;top:311.3px;opacity:0.36" width="10.6" height="17.2" viewBox="0 0 320 512" preserveAspectRatio="none"><rect x="0" y="0" width="320" height="512" rx="48" fill="#0a6fd8"/><circle cx="160" cy="448" r="32" fill="#d3d3d3"/></svg>
<svg class="i" style="left:215.3px;top:313px" width="11" height="11" viewBox="0 0 100 100" preserveAspectRatio="none"><circle cx="50" cy="50" r="43" fill="none" stroke="#222" stroke-width="12"/><path d="M20 20L80 80" stroke="#222" stroke-width="12"/></svg>
<span class="t td" style="left:257.5px;top:315.00px;font-size:10.35px;letter-spacing:0.012px">Legends of Hutto</span>
<span class="t td" style="left:364.4px;top:315.00px;font-size:10.35px;letter-spacing:-0.018px">313 Delby St, Hutto TX 78634</span>
<span class="t td" style="left:554.2px;top:315.00px;font-size:10.35px;letter-spacing:-0.621px">James</span>
<span class="t td" style="left:669.8px;top:315.00px;font-size:10.35px;letter-spacing:0.114px">Morningstar</span>
<span class="t td" style="left:786.5px;top:315.00px;font-size:10.35px;letter-spacing:0.154px">robert...</span>
<svg class="i" style="left:839.9px;top:313.3px" width="6.3" height="10.8" viewBox="44.9688 -1536 933.031 1792" preserveAspectRatio="none"><path transform="scale(1,-1)" fill="#111" d="M978 351q0 -153 -99.5 -263.5t-258.5 -136.5v-175q0 -14 -9 -23t-23 -9h-135q-13 0 -22.5 9.5t-9.5 22.5v175q-66 9 -127.5 31t-101.5 44.5t-74 48t-46.5 37.5t-17.5 18q-17 21 -2 41l103 135q7 10 23 12q15 2 24 -9l2 -2q113 -99 243 -125q37 -8 74 -8q81 0 142.5 43 t61.5 122q0 28 -15 53t-33.5 42t-58.5 37.5t-66 32t-80 32.5q-39 16 -61.5 25t-61.5 26.5t-62.5 31t-56.5 35.5t-53.5 42.5t-43.5 49t-35.5 58t-21 66.5t-8.5 78q0 138 98 242t255 134v180q0 13 9.5 22.5t22.5 9.5h135q14 0 23 -9t9 -23v-176q57 -6 110.5 -23t87 -33.5 t63.5 -37.5t39 -29t15 -14q17 -18 5 -38l-81 -146q-8 -15 -23 -16q-14 -3 -27 7q-3 3 -14.5 12t-39 26.5t-58.5 32t-74.5 26t-85.5 11.5q-95 0 -155 -43t-60 -111q0 -26 8.5 -48t29.5 -41.5t39.5 -33t56 -31t60.5 -27t70 -27.5q53 -20 81 -31.5t76 -35t75.5 -42.5t62 -50 t53 -63.5t31.5 -76.5t13 -94z"/></svg>
<svg class="i" style="left:907.8px;top:313.5px" width="13.9" height="9.6" viewBox="0 0 140 96" preserveAspectRatio="none"><g fill="#111"><circle cx="70" cy="24" r="22"/><path d="M36 96V78Q36 54 60 54H80Q104 54 104 78V96Z"/><circle cx="20" cy="32" r="13"/><path d="M0 72V64Q0 50 14 50H28Q34 50 38 54Q28 62 28 74V72Z"/><circle cx="120" cy="32" r="13"/><path d="M140 72V64Q140 50 126 50H112Q106 50 102 54Q112 62 112 74V72Z"/></g></svg>
<svg class="i" style="left:924.2px;top:313.9px" width="13.8" height="9.2" viewBox="0 0 140 96" preserveAspectRatio="none"><g fill="#111"><circle cx="42" cy="24" r="24"/><path d="M0 96V80Q0 54 26 54H58Q84 54 84 80V96Z"/><circle cx="106" cy="30" r="18"/><path d="M92 90V78Q92 64 86 56Q90 54 96 54H116Q140 54 140 78V90Z"/></g></svg>
<div class="row" style="top:332px;height:24px;background:#f5f5f5">
<div class="cb" style="top:5.0px"></div>
</div>
<svg class="i" style="left:104.1px;top:337.4px" width="17.4" height="12.5" viewBox="0 -1280 1792 1408" preserveAspectRatio="none"><path transform="scale(1,-1)" fill="#0a6fd8" d="M1792 826v-794q0 -66 -47 -113t-113 -47h-1472q-66 0 -113 47t-47 113v794q44 -49 101 -87q362 -246 497 -345q57 -42 92.5 -65.5t94.5 -48t110 -24.5h1h1q51 0 110 24.5t94.5 48t92.5 65.5q170 123 498 345q57 39 100 87zM1792 1120q0 -79 -49 -151t-122 -123 q-376 -261 -468 -325q-10 -7 -42.5 -30.5t-54 -38t-52 -32.5t-57.5 -27t-50 -9h-1h-1q-23 0 -50 9t-57.5 27t-52 32.5t-54 38t-42.5 30.5q-91 64 -262 182.5t-205 142.5q-62 42 -117 115.5t-55 136.5q0 78 41.5 130t118.5 52h1472q65 0 112.5 -47t47.5 -113z"/></svg>
<svg class="i" style="left:127.1px;top:336.1px" width="17.2" height="15" viewBox="0 -1280 1792 1504.12" preserveAspectRatio="none"><path transform="scale(1,-1)" fill="#0a6fd8" d="M640 640q0 53 -37.5 90.5t-90.5 37.5t-90.5 -37.5t-37.5 -90.5t37.5 -90.5t90.5 -37.5t90.5 37.5t37.5 90.5zM1024 640q0 53 -37.5 90.5t-90.5 37.5t-90.5 -37.5t-37.5 -90.5t37.5 -90.5t90.5 -37.5t90.5 37.5t37.5 90.5zM1408 640q0 53 -37.5 90.5t-90.5 37.5 t-90.5 -37.5t-37.5 -90.5t37.5 -90.5t90.5 -37.5t90.5 37.5t37.5 90.5zM1792 640q0 -174 -120 -321.5t-326 -233t-450 -85.5q-110 0 -211 18q-173 -173 -435 -229q-52 -10 -86 -13q-12 -1 -22 6t-13 18q-4 15 20 37q5 5 23.5 21.5t25.5 23.5t23.5 25.5t24 31.5t20.5 37 t20 48t14.5 57.5t12.5 72.5q-146 90 -229.5 216.5t-83.5 269.5q0 174 120 321.5t326 233t450 85.5t450 -85.5t326 -233t120 -321.5z"/></svg>
<svg class="i" style="left:150.1px;top:336.1px" width="15" height="15" viewBox="0 0 1536 1536" preserveAspectRatio="none"><rect x="0" y="0" width="1536" height="1536" rx="170" fill="#0a6fd8"/><path transform="translate(1290,1250) scale(-0.74,-0.74)" fill="#fff" d="M1408 296q0 -27 -10 -70.5t-21 -68.5q-21 -50 -122 -106q-94 -51 -186 -51q-27 0 -53 3.5t-57.5 12.5t-47 14.5t-55.5 20.5t-49 18q-98 35 -175 83q-127 79 -264 216t-216 264q-48 77 -83 175q-3 9 -18 49t-20.5 55.5t-14.5 47t-12.5 57.5t-3.5 53q0 92 51 186 q56 101 106 122q25 11 68.5 21t70.5 10q14 0 21 -3q18 -6 53 -76q11 -19 30 -54t35 -63.5t31 -53.5q3 -4 17.5 -25t21.5 -35.5t7 -28.5q0 -20 -28.5 -50t-62 -55t-62 -53t-28.5 -46q0 -9 5 -22.5t8.5 -20.5t14 -24t11.5 -19q76 -137 174 -235t235 -174q2 -1 19 -11.5t24 -14 t20.5 -8.5t22.5 -5q18 0 46 28.5t53 62t55 62t50 28.5q14 0 28.5 -7t35.5 -21.5t25 -17.5q25 -15 53.5 -31t63.5 -35t54 -30q70 -35 76 -53q3 -7 3 -21z"/></svg>
<svg class="i" style="left:171px;top:335.1px" width="10.6" height="17.2" viewBox="0 0 320 512" preserveAspectRatio="none"><rect x="0" y="0" width="320" height="512" rx="48" fill="#0a6fd8"/><circle cx="160" cy="448" r="32" fill="#f5f5f5"/></svg>
<svg class="i" style="left:216px;top:337.1px" width="10.3" height="10.3" viewBox="0 0 100 100" preserveAspectRatio="none"><g fill="none" stroke="#0a6fd8" stroke-width="13" transform="rotate(-45 50 50)"><rect x="-8" y="28" width="62" height="44" rx="22"/><rect x="46" y="28" width="62" height="44" rx="22"/></g></svg>
<span class="t b" style="left:211px;top:341.00px;font-size:6.6px;color:#f00;font-style:italic;letter-spacing:-0.3px;font-family:'Liberation Serif',serif">90</span>
<span class="t td" style="left:257.5px;top:339.00px;font-size:10.35px;letter-spacing:0.012px">Legends of Hutto</span>
<span class="t td" style="left:364.4px;top:339.00px;font-size:10.35px;letter-spacing:0.063px">102 Lidell St, Hutto TX 78634</span>
<span class="t td" style="left:554.2px;top:339.00px;font-size:10.35px;letter-spacing:-0.051px">Robert</span>
<span class="t td" style="left:669.8px;top:339.00px;font-size:10.35px;letter-spacing:0.227px">Holte</span>
<span class="t td" style="left:786.5px;top:339.00px;font-size:10.35px;letter-spacing:0.154px">robert...</span>
<svg class="i" style="left:839.9px;top:337.1px" width="6.3" height="10.8" viewBox="44.9688 -1536 933.031 1792" preserveAspectRatio="none"><path transform="scale(1,-1)" fill="#111" d="M978 351q0 -153 -99.5 -263.5t-258.5 -136.5v-175q0 -14 -9 -23t-23 -9h-135q-13 0 -22.5 9.5t-9.5 22.5v175q-66 9 -127.5 31t-101.5 44.5t-74 48t-46.5 37.5t-17.5 18q-17 21 -2 41l103 135q7 10 23 12q15 2 24 -9l2 -2q113 -99 243 -125q37 -8 74 -8q81 0 142.5 43 t61.5 122q0 28 -15 53t-33.5 42t-58.5 37.5t-66 32t-80 32.5q-39 16 -61.5 25t-61.5 26.5t-62.5 31t-56.5 35.5t-53.5 42.5t-43.5 49t-35.5 58t-21 66.5t-8.5 78q0 138 98 242t255 134v180q0 13 9.5 22.5t22.5 9.5h135q14 0 23 -9t9 -23v-176q57 -6 110.5 -23t87 -33.5 t63.5 -37.5t39 -29t15 -14q17 -18 5 -38l-81 -146q-8 -15 -23 -16q-14 -3 -27 7q-3 3 -14.5 12t-39 26.5t-58.5 32t-74.5 26t-85.5 11.5q-95 0 -155 -43t-60 -111q0 -26 8.5 -48t29.5 -41.5t39.5 -33t56 -31t60.5 -27t70 -27.5q53 -20 81 -31.5t76 -35t75.5 -42.5t62 -50 t53 -63.5t31.5 -76.5t13 -94z"/></svg>
<svg class="i" style="left:907.8px;top:336.7px" width="12.3" height="11" viewBox="0 0 1740 1664" preserveAspectRatio="none"><path transform="translate(0,1664) scale(0.8,-0.93) translate(-93,256)" fill="#111" d="M1699 1350q0 -35 -43 -78l-632 -632v-768h320q26 0 45 -19t19 -45t-19 -45t-45 -19h-896q-26 0 -45 19t-19 45t19 45t45 19h320v768l-632 632q-43 43 -43 78q0 23 18 36.5t38 17.5t43 4h1408q23 0 43 -4t38 -17.5t18 -36.5z"/><circle cx="1440" cy="320" r="250" fill="none" stroke="#111" stroke-width="120"/></svg>
<svg class="i" style="left:922.9px;top:336.8px" width="10" height="11" viewBox="0 -1536 1408 1664" preserveAspectRatio="none"><path transform="scale(1,-1)" fill="#111" d="M576 0l96 448l-96 128l-128 64zM832 0l128 640l-128 -64l-96 -128zM992 1010q-2 4 -4 6q-10 8 -96 8q-70 0 -167 -19q-7 -2 -21 -2t-21 2q-97 19 -167 19q-86 0 -96 -8q-2 -2 -4 -6q2 -18 4 -27q2 -3 7.5 -6.5t7.5 -10.5q2 -4 7.5 -20.5t7 -20.5t7.5 -17t8.5 -17t9 -14 t12 -13.5t14 -9.5t17.5 -8t20.5 -4t24.5 -2q36 0 59 12.5t32.5 30t14.5 34.5t11.5 29.5t17.5 12.5h12q11 0 17.5 -12.5t11.5 -29.5t14.5 -34.5t32.5 -30t59 -12.5q13 0 24.5 2t20.5 4t17.5 8t14 9.5t12 13.5t9 14t8.5 17t7.5 17t7 20.5t7.5 20.5q2 7 7.5 10.5t7.5 6.5 q2 9 4 27zM1408 131q0 -121 -73 -190t-194 -69h-874q-121 0 -194 69t-73 190q0 61 4.5 118t19 125.5t37.5 123.5t63.5 103.5t93.5 74.5l-90 220h214q-22 64 -22 128q0 12 2 32q-194 40 -194 96q0 57 210 99q17 62 51.5 134t70.5 114q32 37 76 37q30 0 84 -31t84 -31t84 31 t84 31q44 0 76 -37q36 -42 70.5 -114t51.5 -134q210 -42 210 -99q0 -56 -194 -96q7 -81 -20 -160h214l-82 -225q63 -33 107.5 -96.5t65.5 -143.5t29 -151.5t8 -148.5z"/></svg>
<svg class="i" style="left:935.6px;top:337.7px" width="13.8" height="9.2" viewBox="0 0 140 96" preserveAspectRatio="none"><g fill="#111"><circle cx="42" cy="24" r="24"/><path d="M0 96V80Q0 54 26 54H58Q84 54 84 80V96Z"/><circle cx="106" cy="30" r="18"/><path d="M92 90V78Q92 64 86 56Q90 54 96 54H116Q140 54 140 78V90Z"/></g></svg>
<div class="row" style="top:356px;height:23px;background:#d3d3d3">
<div class="cb" style="top:4.8px"></div>
</div>
<svg class="i" style="left:104.1px;top:361.2px" width="17.4" height="12.5" viewBox="0 -1280 1792 1408" preserveAspectRatio="none"><path transform="scale(1,-1)" fill="#0a6fd8" d="M1792 826v-794q0 -66 -47 -113t-113 -47h-1472q-66 0 -113 47t-47 113v794q44 -49 101 -87q362 -246 497 -345q57 -42 92.5 -65.5t94.5 -48t110 -24.5h1h1q51 0 110 24.5t94.5 48t92.5 65.5q170 123 498 345q57 39 100 87zM1792 1120q0 -79 -49 -151t-122 -123 q-376 -261 -468 -325q-10 -7 -42.5 -30.5t-54 -38t-52 -32.5t-57.5 -27t-50 -9h-1h-1q-23 0 -50 9t-57.5 27t-52 32.5t-54 38t-42.5 30.5q-91 64 -262 182.5t-205 142.5q-62 42 -117 115.5t-55 136.5q0 78 41.5 130t118.5 52h1472q65 0 112.5 -47t47.5 -113z"/></svg>
<svg class="i" style="left:127.1px;top:359.9px;opacity:0.36" width="17.2" height="15" viewBox="0 -1280 1792 1504.12" preserveAspectRatio="none"><path transform="scale(1,-1)" fill="#0a6fd8" d="M640 640q0 53 -37.5 90.5t-90.5 37.5t-90.5 -37.5t-37.5 -90.5t37.5 -90.5t90.5 -37.5t90.5 37.5t37.5 90.5zM1024 640q0 53 -37.5 90.5t-90.5 37.5t-90.5 -37.5t-37.5 -90.5t37.5 -90.5t90.5 -37.5t90.5 37.5t37.5 90.5zM1408 640q0 53 -37.5 90.5t-90.5 37.5 t-90.5 -37.5t-37.5 -90.5t37.5 -90.5t90.5 -37.5t90.5 37.5t37.5 90.5zM1792 640q0 -174 -120 -321.5t-326 -233t-450 -85.5q-110 0 -211 18q-173 -173 -435 -229q-52 -10 -86 -13q-12 -1 -22 6t-13 18q-4 15 20 37q5 5 23.5 21.5t25.5 23.5t23.5 25.5t24 31.5t20.5 37 t20 48t14.5 57.5t12.5 72.5q-146 90 -229.5 216.5t-83.5 269.5q0 174 120 321.5t326 233t450 85.5t450 -85.5t326 -233t120 -321.5z"/></svg>
<svg class="i" style="left:150.1px;top:359.9px;opacity:0.36" width="15" height="15" viewBox="0 0 1536 1536" preserveAspectRatio="none"><rect x="0" y="0" width="1536" height="1536" rx="170" fill="#0a6fd8"/><path transform="translate(1290,1250) scale(-0.74,-0.74)" fill="#fff" d="M1408 296q0 -27 -10 -70.5t-21 -68.5q-21 -50 -122 -106q-94 -51 -186 -51q-27 0 -53 3.5t-57.5 12.5t-47 14.5t-55.5 20.5t-49 18q-98 35 -175 83q-127 79 -264 216t-216 264q-48 77 -83 175q-3 9 -18 49t-20.5 55.5t-14.5 47t-12.5 57.5t-3.5 53q0 92 51 186 q56 101 106 122q25 11 68.5 21t70.5 10q14 0 21 -3q18 -6 53 -76q11 -19 30 -54t35 -63.5t31 -53.5q3 -4 17.5 -25t21.5 -35.5t7 -28.5q0 -20 -28.5 -50t-62 -55t-62 -53t-28.5 -46q0 -9 5 -22.5t8.5 -20.5t14 -24t11.5 -19q76 -137 174 -235t235 -174q2 -1 19 -11.5t24 -14 t20.5 -8.5t22.5 -5q18 0 46 28.5t53 62t55 62t50 28.5q14 0 28.5 -7t35.5 -21.5t25 -17.5q25 -15 53.5 -31t63.5 -35t54 -30q70 -35 76 -53q3 -7 3 -21z"/></svg>
<svg class="i" style="left:171px;top:358.9px;opacity:0.36" width="10.6" height="17.2" viewBox="0 0 320 512" preserveAspectRatio="none"><rect x="0" y="0" width="320" height="512" rx="48" fill="#0a6fd8"/><circle cx="160" cy="448" r="32" fill="#d3d3d3"/></svg>
<svg class="i" style="left:215.3px;top:360.6px" width="11" height="11" viewBox="0 0 100 100" preserveAspectRatio="none"><circle cx="50" cy="50" r="43" fill="none" stroke="#222" stroke-width="12"/><path d="M20 20L80 80" stroke="#222" stroke-width="12"/></svg>
<span class="t td" style="left:257.5px;top:363.00px;font-size:10.35px;letter-spacing:0.012px">Legends of Hutto</span>
<span class="t td" style="left:364.4px;top:363.00px;font-size:10.35px;letter-spacing:0.089px">110 Lidell St, Hutto TX 78634</span>
<span class="t td" style="left:554.2px;top:363.00px;font-size:10.35px;letter-spacing:0.082px">Emily</span>
<span class="t td" style="left:669.8px;top:363.00px;font-size:10.35px;letter-spacing:0.163px">Williams</span>
<span class="t td" style="left:786.5px;top:363.00px;font-size:10.35px;letter-spacing:0.239px">ewillia...</span>
<div class="row" style="top:379px;height:24px;background:#f5f5f5">
<div class="cb" style="top:5.6px"></div>
</div>
<svg class="i" style="left:104.1px;top:385px" width="17.4" height="12.5" viewBox="0 -1280 1792 1408" preserveAspectRatio="none"><path transform="scale(1,-1)" fill="#0a6fd8" d="M1792 826v-794q0 -66 -47 -113t-113 -47h-1472q-66 0 -113 47t-47 113v794q44 -49 101 -87q362 -246 497 -345q57 -42 92.5 -65.5t94.5 -48t110 -24.5h1h1q51 0 110 24.5t94.5 48t92.5 65.5q170 123 498 345q57 39 100 87zM1792 1120q0 -79 -49 -151t-122 -123 q-376 -261 -468 -325q-10 -7 -42.5 -30.5t-54 -38t-52 -32.5t-57.5 -27t-50 -9h-1h-1q-23 0 -50 9t-57.5 27t-52 32.5t-54 38t-42.5 30.5q-91 64 -262 182.5t-205 142.5q-62 42 -117 115.5t-55 136.5q0 78 41.5 130t118.5 52h1472q65 0 112.5 -47t47.5 -113z"/></svg>
<svg class="i" style="left:127.1px;top:383.7px" width="17.2" height="15" viewBox="0 -1280 1792 1504.12" preserveAspectRatio="none"><path transform="scale(1,-1)" fill="#0a6fd8" d="M640 640q0 53 -37.5 90.5t-90.5 37.5t-90.5 -37.5t-37.5 -90.5t37.5 -90.5t90.5 -37.5t90.5 37.5t37.5 90.5zM1024 640q0 53 -37.5 90.5t-90.5 37.5t-90.5 -37.5t-37.5 -90.5t37.5 -90.5t90.5 -37.5t90.5 37.5t37.5 90.5zM1408 640q0 53 -37.5 90.5t-90.5 37.5 t-90.5 -37.5t-37.5 -90.5t37.5 -90.5t90.5 -37.5t90.5 37.5t37.5 90.5zM1792 640q0 -174 -120 -321.5t-326 -233t-450 -85.5q-110 0 -211 18q-173 -173 -435 -229q-52 -10 -86 -13q-12 -1 -22 6t-13 18q-4 15 20 37q5 5 23.5 21.5t25.5 23.5t23.5 25.5t24 31.5t20.5 37 t20 48t14.5 57.5t12.5 72.5q-146 90 -229.5 216.5t-83.5 269.5q0 174 120 321.5t326 233t450 85.5t450 -85.5t326 -233t120 -321.5z"/></svg>
<svg class="i" style="left:150.1px;top:383.7px" width="15" height="15" viewBox="0 0 1536 1536" preserveAspectRatio="none"><rect x="0" y="0" width="1536" height="1536" rx="170" fill="#0a6fd8"/><path transform="translate(1290,1250) scale(-0.74,-0.74)" fill="#fff" d="M1408 296q0 -27 -10 -70.5t-21 -68.5q-21 -50 -122 -106q-94 -51 -186 -51q-27 0 -53 3.5t-57.5 12.5t-47 14.5t-55.5 20.5t-49 18q-98 35 -175 83q-127 79 -264 216t-216 264q-48 77 -83 175q-3 9 -18 49t-20.5 55.5t-14.5 47t-12.5 57.5t-3.5 53q0 92 51 186 q56 101 106 122q25 11 68.5 21t70.5 10q14 0 21 -3q18 -6 53 -76q11 -19 30 -54t35 -63.5t31 -53.5q3 -4 17.5 -25t21.5 -35.5t7 -28.5q0 -20 -28.5 -50t-62 -55t-62 -53t-28.5 -46q0 -9 5 -22.5t8.5 -20.5t14 -24t11.5 -19q76 -137 174 -235t235 -174q2 -1 19 -11.5t24 -14 t20.5 -8.5t22.5 -5q18 0 46 28.5t53 62t55 62t50 28.5q14 0 28.5 -7t35.5 -21.5t25 -17.5q25 -15 53.5 -31t63.5 -35t54 -30q70 -35 76 -53q3 -7 3 -21z"/></svg>
<svg class="i" style="left:171px;top:382.7px;opacity:0.36" width="10.6" height="17.2" viewBox="0 0 320 512" preserveAspectRatio="none"><rect x="0" y="0" width="320" height="512" rx="48" fill="#0a6fd8"/><circle cx="160" cy="448" r="32" fill="#f5f5f5"/></svg>
<svg class="i" style="left:215.3px;top:384.4px" width="11" height="11" viewBox="0 0 100 100" preserveAspectRatio="none"><circle cx="50" cy="50" r="43" fill="none" stroke="#222" stroke-width="12"/><path d="M20 20L80 80" stroke="#222" stroke-width="12"/></svg>
<span class="t td" style="left:257.5px;top:387.00px;font-size:10.35px;letter-spacing:0.012px">Legends of Hutto</span>
<span class="t td" style="left:364.4px;top:387.00px;font-size:10.35px;letter-spacing:-0.003px">113 Oman St, Hutto TX 78634</span>
<span class="t td" style="left:554.2px;top:387.00px;font-size:10.35px;letter-spacing:-0.090px">Richard</span>
<span class="t td" style="left:669.8px;top:387.00px;font-size:10.35px;letter-spacing:0.332px">Maritt</span>
<span class="t td" style="left:786.5px;top:387.00px;font-size:10.35px;letter-spacing:0.154px">robert...</span>
<svg class="i" style="left:839.9px;top:384.3px" width="13.5" height="11.2" viewBox="0 -1536 2176 1792" preserveAspectRatio="none"><path stroke="#111" stroke-width="70" transform="scale(1,-1)" fill="#111" d="M1728 1088l-384 -704h768zM448 1088l-384 -704h768zM1269 1280q-14 -40 -45.5 -71.5t-71.5 -45.5v-1291h608q14 0 23 -9t9 -23v-64q0 -14 -9 -23t-23 -9h-1344q-14 0 -23 9t-9 23v64q0 14 9 23t23 9h608v1291q-40 14 -71.5 45.5t-45.5 71.5h-491q-14 0 -23 9t-9 23v64 q0 14 9 23t23 9h491q21 57 70 92.5t111 35.5t111 -35.5t70 -92.5h491q14 0 23 -9t9 -23v-64q0 -14 -9 -23t-23 -9h-491zM1088 1264q33 0 56.5 23.5t23.5 56.5t-23.5 56.5t-56.5 23.5t-56.5 -23.5t-23.5 -56.5t23.5 -56.5t56.5 -23.5zM2176 384q0 -73 -46.5 -131t-117.5 -91 t-144.5 -49.5t-139.5 -16.5t-139.5 16.5t-144.5 49.5t-117.5 91t-46.5 131q0 11 35 81t92 174.5t107 195.5t102 184t56 100q18 33 56 33t56 -33q4 -7 56 -100t102 -184t107 -195.5t92 -174.5t35 -81zM896 384q0 -73 -46.5 -131t-117.5 -91t-144.5 -49.5t-139.5 -16.5 t-139.5 16.5t-144.5 49.5t-117.5 91t-46.5 131q0 11 35 81t92 174.5t107 195.5t102 184t56 100q18 33 56 33t56 -33q4 -7 56 -100t102 -184t107 -195.5t92 -174.5t35 -81z"/></svg>
<svg class="i" style="left:856.7px;top:384.7px" width="6.3" height="10.8" viewBox="44.9688 -1536 933.031 1792" preserveAspectRatio="none"><path transform="scale(1,-1)" fill="#111" d="M978 351q0 -153 -99.5 -263.5t-258.5 -136.5v-175q0 -14 -9 -23t-23 -9h-135q-13 0 -22.5 9.5t-9.5 22.5v175q-66 9 -127.5 31t-101.5 44.5t-74 48t-46.5 37.5t-17.5 18q-17 21 -2 41l103 135q7 10 23 12q15 2 24 -9l2 -2q113 -99 243 -125q37 -8 74 -8q81 0 142.5 43 t61.5 122q0 28 -15 53t-33.5 42t-58.5 37.5t-66 32t-80 32.5q-39 16 -61.5 25t-61.5 26.5t-62.5 31t-56.5 35.5t-53.5 42.5t-43.5 49t-35.5 58t-21 66.5t-8.5 78q0 138 98 242t255 134v180q0 13 9.5 22.5t22.5 9.5h135q14 0 23 -9t9 -23v-176q57 -6 110.5 -23t87 -33.5 t63.5 -37.5t39 -29t15 -14q17 -18 5 -38l-81 -146q-8 -15 -23 -16q-14 -3 -27 7q-3 3 -14.5 12t-39 26.5t-58.5 32t-74.5 26t-85.5 11.5q-95 0 -155 -43t-60 -111q0 -26 8.5 -48t29.5 -41.5t39.5 -33t56 -31t60.5 -27t70 -27.5q53 -20 81 -31.5t76 -35t75.5 -42.5t62 -50 t53 -63.5t31.5 -76.5t13 -94z"/></svg>
<div class="row" style="top:403px;height:24px;background:#d3d3d3">
<div class="cb" style="top:5.4px"></div>
</div>
<svg class="i" style="left:104.1px;top:408.8px" width="17.4" height="12.5" viewBox="0 -1280 1792 1408" preserveAspectRatio="none"><path transform="scale(1,-1)" fill="#0a6fd8" d="M1792 826v-794q0 -66 -47 -113t-113 -47h-1472q-66 0 -113 47t-47 113v794q44 -49 101 -87q362 -246 497 -345q57 -42 92.5 -65.5t94.5 -48t110 -24.5h1h1q51 0 110 24.5t94.5 48t92.5 65.5q170 123 498 345q57 39 100 87zM1792 1120q0 -79 -49 -151t-122 -123 q-376 -261 -468 -325q-10 -7 -42.5 -30.5t-54 -38t-52 -32.5t-57.5 -27t-50 -9h-1h-1q-23 0 -50 9t-57.5 27t-52 32.5t-54 38t-42.5 30.5q-91 64 -262 182.5t-205 142.5q-62 42 -117 115.5t-55 136.5q0 78 41.5 130t118.5 52h1472q65 0 112.5 -47t47.5 -113z"/></svg>
<svg class="i" style="left:127.1px;top:407.5px" width="17.2" height="15" viewBox="0 -1280 1792 1504.12" preserveAspectRatio="none"><path transform="scale(1,-1)" fill="#0a6fd8" d="M640 640q0 53 -37.5 90.5t-90.5 37.5t-90.5 -37.5t-37.5 -90.5t37.5 -90.5t90.5 -37.5t90.5 37.5t37.5 90.5zM1024 640q0 53 -37.5 90.5t-90.5 37.5t-90.5 -37.5t-37.5 -90.5t37.5 -90.5t90.5 -37.5t90.5 37.5t37.5 90.5zM1408 640q0 53 -37.5 90.5t-90.5 37.5 t-90.5 -37.5t-37.5 -90.5t37.5 -90.5t90.5 -37.5t90.5 37.5t37.5 90.5zM1792 640q0 -174 -120 -321.5t-326 -233t-450 -85.5q-110 0 -211 18q-173 -173 -435 -229q-52 -10 -86 -13q-12 -1 -22 6t-13 18q-4 15 20 37q5 5 23.5 21.5t25.5 23.5t23.5 25.5t24 31.5t20.5 37 t20 48t14.5 57.5t12.5 72.5q-146 90 -229.5 216.5t-83.5 269.5q0 174 120 321.5t326 233t450 85.5t450 -85.5t326 -233t120 -321.5z"/></svg>
<svg class="i" style="left:150.1px;top:407.5px" width="15" height="15" viewBox="0 0 1536 1536" preserveAspectRatio="none"><rect x="0" y="0" width="1536" height="1536" rx="170" fill="#0a6fd8"/><path transform="translate(1290,1250) scale(-0.74,-0.74)" fill="#fff" d="M1408 296q0 -27 -10 -70.5t-21 -68.5q-21 -50 -122 -106q-94 -51 -186 -51q-27 0 -53 3.5t-57.5 12.5t-47 14.5t-55.5 20.5t-49 18q-98 35 -175 83q-127 79 -264 216t-216 264q-48 77 -83 175q-3 9 -18 49t-20.5 55.5t-14.5 47t-12.5 57.5t-3.5 53q0 92 51 186 q56 101 106 122q25 11 68.5 21t70.5 10q14 0 21 -3q18 -6 53 -76q11 -19 30 -54t35 -63.5t31 -53.5q3 -4 17.5 -25t21.5 -35.5t7 -28.5q0 -20 -28.5 -50t-62 -55t-62 -53t-28.5 -46q0 -9 5 -22.5t8.5 -20.5t14 -24t11.5 -19q76 -137 174 -235t235 -174q2 -1 19 -11.5t24 -14 t20.5 -8.5t22.5 -5q18 0 46 28.5t53 62t55 62t50 28.5q14 0 28.5 -7t35.5 -21.5t25 -17.5q25 -15 53.5 -31t63.5 -35t54 -30q70 -35 76 -53q3 -7 3 -21z"/></svg>
<svg class="i" style="left:171px;top:406.5px" width="10.6" height="17.2" viewBox="0 0 320 512" preserveAspectRatio="none"><rect x="0" y="0" width="320" height="512" rx="48" fill="#0a6fd8"/><circle cx="160" cy="448" r="32" fill="#d3d3d3"/></svg>
<svg class="i" style="left:216px;top:408.5px" width="10.3" height="10.3" viewBox="0 0 100 100" preserveAspectRatio="none"><g fill="none" stroke="#0a6fd8" stroke-width="13" transform="rotate(-45 50 50)"><rect x="-8" y="28" width="62" height="44" rx="22"/><rect x="46" y="28" width="62" height="44" rx="22"/></g></svg>
<span class="t b" style="left:211px;top:413.00px;font-size:6.6px;color:#f00;font-style:italic;letter-spacing:-0.3px;font-family:'Liberation Serif',serif">30</span>
<span class="t td" style="left:257.5px;top:410.00px;font-size:10.35px;letter-spacing:0.012px">Legends of Hutto</span>
<span class="t td" style="left:364.4px;top:410.00px;font-size:10.35px;letter-spacing:0.032px">320 Liberty St, Hutto TX 78634</span>
<span class="t td" style="left:554.2px;top:410.00px;font-size:10.35px;letter-spacing:0.099px">Keith</span>
<span class="t td" style="left:669.8px;top:410.00px;font-size:10.35px;letter-spacing:-0.009px">Fields</span>
<span class="t td" style="left:786.5px;top:410.00px;font-size:10.35px;letter-spacing:0.154px">robert...</span>
<svg class="i" style="left:839.9px;top:408.1px" width="13.5" height="11.2" viewBox="0 -1536 2176 1792" preserveAspectRatio="none"><path stroke="#111" stroke-width="70" transform="scale(1,-1)" fill="#111" d="M1728 1088l-384 -704h768zM448 1088l-384 -704h768zM1269 1280q-14 -40 -45.5 -71.5t-71.5 -45.5v-1291h608q14 0 23 -9t9 -23v-64q0 -14 -9 -23t-23 -9h-1344q-14 0 -23 9t-9 23v64q0 14 9 23t23 9h608v1291q-40 14 -71.5 45.5t-45.5 71.5h-491q-14 0 -23 9t-9 23v64 q0 14 9 23t23 9h491q21 57 70 92.5t111 35.5t111 -35.5t70 -92.5h491q14 0 23 -9t9 -23v-64q0 -14 -9 -23t-23 -9h-491zM1088 1264q33 0 56.5 23.5t23.5 56.5t-23.5 56.5t-56.5 23.5t-56.5 -23.5t-23.5 -56.5t23.5 -56.5t56.5 -23.5zM2176 384q0 -73 -46.5 -131t-117.5 -91 t-144.5 -49.5t-139.5 -16.5t-139.5 16.5t-144.5 49.5t-117.5 91t-46.5 131q0 11 35 81t92 174.5t107 195.5t102 184t56 100q18 33 56 33t56 -33q4 -7 56 -100t102 -184t107 -195.5t92 -174.5t35 -81zM896 384q0 -73 -46.5 -131t-117.5 -91t-144.5 -49.5t-139.5 -16.5 t-139.5 16.5t-144.5 49.5t-117.5 91t-46.5 131q0 11 35 81t92 174.5t107 195.5t102 184t56 100q18 33 56 33t56 -33q4 -7 56 -100t102 -184t107 -195.5t92 -174.5t35 -81z"/></svg>
<svg class="i" style="left:856.7px;top:408.5px" width="6.3" height="10.8" viewBox="44.9688 -1536 933.031 1792" preserveAspectRatio="none"><path transform="scale(1,-1)" fill="#111" d="M978 351q0 -153 -99.5 -263.5t-258.5 -136.5v-175q0 -14 -9 -23t-23 -9h-135q-13 0 -22.5 9.5t-9.5 22.5v175q-66 9 -127.5 31t-101.5 44.5t-74 48t-46.5 37.5t-17.5 18q-17 21 -2 41l103 135q7 10 23 12q15 2 24 -9l2 -2q113 -99 243 -125q37 -8 74 -8q81 0 142.5 43 t61.5 122q0 28 -15 53t-33.5 42t-58.5 37.5t-66 32t-80 32.5q-39 16 -61.5 25t-61.5 26.5t-62.5 31t-56.5 35.5t-53.5 42.5t-43.5 49t-35.5 58t-21 66.5t-8.5 78q0 138 98 242t255 134v180q0 13 9.5 22.5t22.5 9.5h135q14 0 23 -9t9 -23v-176q57 -6 110.5 -23t87 -33.5 t63.5 -37.5t39 -29t15 -14q17 -18 5 -38l-81 -146q-8 -15 -23 -16q-14 -3 -27 7q-3 3 -14.5 12t-39 26.5t-58.5 32t-74.5 26t-85.5 11.5q-95 0 -155 -43t-60 -111q0 -26 8.5 -48t29.5 -41.5t39.5 -33t56 -31t60.5 -27t70 -27.5q53 -20 81 -31.5t76 -35t75.5 -42.5t62 -50 t53 -63.5t31.5 -76.5t13 -94z"/></svg>
<svg class="i" style="left:907.8px;top:408.7px" width="13.9" height="9.6" viewBox="0 0 140 96" preserveAspectRatio="none"><g fill="#111"><circle cx="70" cy="24" r="22"/><path d="M36 96V78Q36 54 60 54H80Q104 54 104 78V96Z"/><circle cx="20" cy="32" r="13"/><path d="M0 72V64Q0 50 14 50H28Q34 50 38 54Q28 62 28 74V72Z"/><circle cx="120" cy="32" r="13"/><path d="M140 72V64Q140 50 126 50H112Q106 50 102 54Q112 62 112 74V72Z"/></g></svg>
<svg class="i" style="left:924.2px;top:409.1px" width="13.8" height="9.2" viewBox="0 0 140 96" preserveAspectRatio="none"><g fill="#111"><circle cx="42" cy="24" r="24"/><path d="M0 96V80Q0 54 26 54H58Q84 54 84 80V96Z"/><circle cx="106" cy="30" r="18"/><path d="M92 90V78Q92 64 86 56Q90 54 96 54H116Q140 54 140 78V90Z"/></g></svg>
<svg class="i" style="left:940.9px;top:409.1px" width="13.8" height="9.2" viewBox="0 0 140 96" preserveAspectRatio="none"><g fill="#111"><circle cx="42" cy="24" r="24"/><path d="M0 96V80Q0 54 26 54H58Q84 54 84 80V96Z"/><circle cx="106" cy="30" r="18"/><path d="M92 90V78Q92 64 86 56Q90 54 96 54H116Q140 54 140 78V90Z"/></g></svg>
</div>
</body>
</html>
